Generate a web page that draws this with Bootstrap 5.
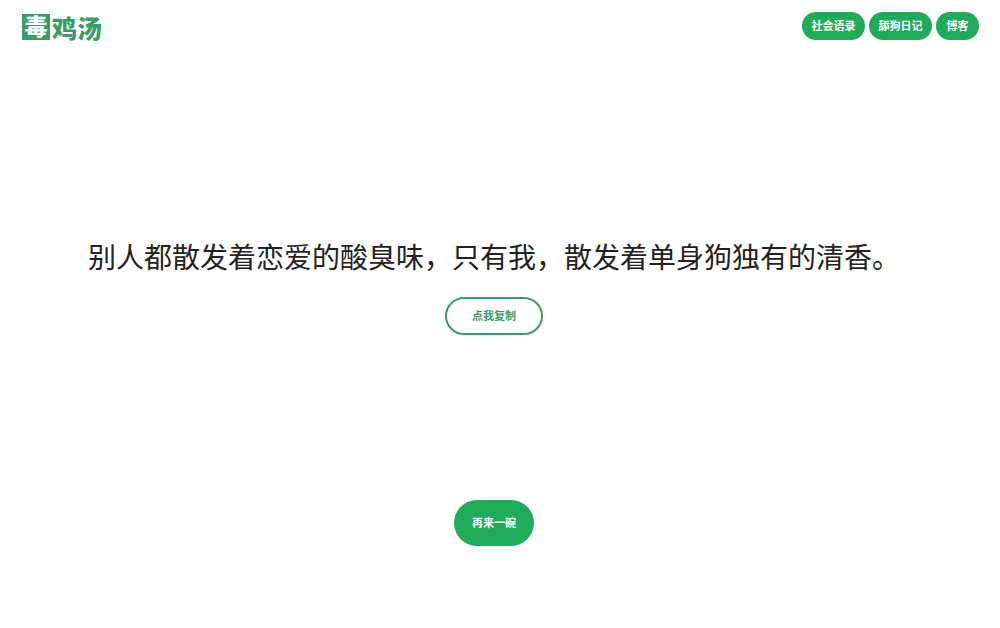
<!DOCTYPE html>
<html lang="zh">
<head>
<meta charset="utf-8">
<title>毒鸡汤</title>
<link href="https://cdn.jsdelivr.net/npm/bootstrap@5.3.0/dist/css/bootstrap.min.css" rel="stylesheet">
<style>
html,body{height:628px;overflow:hidden;background:#fff}
body{font-family:"Liberation Sans","Noto Sans CJK SC",sans-serif;color:#212529}
.page-wrap{width:988px;height:628px;display:flex;flex-direction:column;align-items:center}
.top-bar{width:100%;height:53px;padding:12px 9px 0 22px;display:flex;justify-content:space-between;align-items:flex-start}
.logo-mark{display:flex;align-items:center;margin-top:2px;font-family:"Noto Sans CJK SC",sans-serif;font-weight:900;font-size:25px;line-height:26px;color:#3d9b6a}
.logo-first{background:#3d9b6a;color:#fff;width:28px;height:26px;font-size:23px;line-height:23px;padding-bottom:3px;display:flex;align-items:center;justify-content:center;margin-right:2px}
.nav-pill{background:#1fab59;color:#fff;border-radius:14px;height:28px;width:63px;text-align:center;font-family:"Noto Sans CJK SC",sans-serif;font-size:11px;font-weight:700;line-height:27px;text-decoration:none;white-space:nowrap}
.nav-pill-short{width:43px}
.soup-text{margin:183px 0 0;font-family:"Noto Sans CJK SC",sans-serif;font-size:28px;font-weight:400;line-height:40px;color:#222;white-space:nowrap}
.copy-btn{margin-top:21px;width:98px;height:38px;border:2px solid #3d9b6a;border-radius:19px;background:#fff;color:#3d9b6a;font-family:"Noto Sans CJK SC",sans-serif;font-size:11px;font-weight:700;padding:0 0 2px;line-height:32px}
.next-btn{margin-top:165px;width:80px;height:46px;border:0;border-radius:23px;background:#1fab59;color:#fff;font-family:"Noto Sans CJK SC",sans-serif;font-size:11px;font-weight:700;padding:0 0 2px}
</style>
</head>
<body>
<div class="page-wrap">
  <header class="top-bar">
    <div class="logo-mark"><span class="logo-first">毒</span><span>鸡汤</span></div>
    <nav class="d-flex gap-1">
      <a class="nav-pill" href="#">社会语录</a>
      <a class="nav-pill" href="#">舔狗日记</a>
      <a class="nav-pill nav-pill-short" href="#">博客</a>
    </nav>
  </header>
  <main class="d-flex flex-column align-items-center">
    <p class="soup-text">别人都散发着恋爱的酸臭味，只有我，散发着单身狗独有的清香。</p>
    <button class="copy-btn" type="button">点我复制</button>
    <button class="next-btn" type="button">再来一碗</button>
  </main>
</div>
<script src="https://cdn.jsdelivr.net/npm/bootstrap@5.3.0/dist/js/bootstrap.bundle.min.js"></script>
</body>
</html>
